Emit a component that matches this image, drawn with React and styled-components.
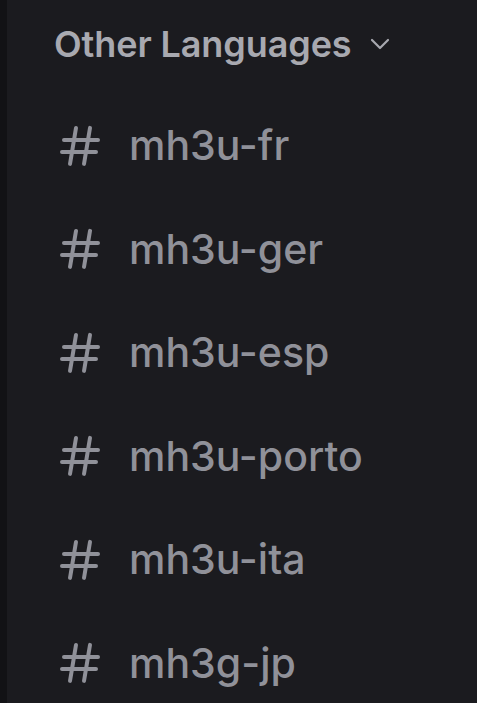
import React from 'react';
import styled, { createGlobalStyle } from 'styled-components';

const GlobalStyle = createGlobalStyle`
    html, body {
        margin: 0;
        padding: 0;
        background: #1b1b1f;
    }
    body {
        font-family: Inter, "Noto Sans", sans-serif;
    }
`;

const channels = ['mh3u-fr', 'mh3u-ger', 'mh3u-esp', 'mh3u-porto', 'mh3u-ita', 'mh3g-jp'];

const Frame = styled.div`
    display: flex;
    width: 477px;
    height: 703px;
    overflow: hidden;
    background: #1b1b1f;
`;

const Rail = styled.div`
    width: 7px;
    flex: none;
    background: #121215;
`;

const Sidebar = styled.div`
    flex: 1;
    display: flex;
    flex-direction: column;
    padding: 22px 0 0 47px;
`;

const CategoryHeader = styled.div`
    display: flex;
    align-items: center;
    gap: 18px;
    height: 48px;
    color: #a8a9b0;
    font-size: 36px;
    font-weight: 600;
    letter-spacing: -0.1px;
`;

const Chevron = () => (
    <svg width="20" height="12" viewBox="0 0 20 12" fill="none">
        <path d="M2 2l8 8 8-8" stroke="#a8a9b0" strokeWidth="2.2" strokeLinecap="round" strokeLinejoin="round" />
    </svg>
);

const ChannelList = styled.ul`
    list-style: none;
    margin: 28px 0 0;
    padding: 0;
`;

const ChannelRow = styled.li`
    display: flex;
    align-items: center;
    height: 103.5px;
    gap: 25px;
    padding-left: 2px;
    color: #909199;
    font-size: 41px;
    font-weight: 500;
`;

const HashIcon = () => (
    <svg width="48" height="48" viewBox="0 0 24 24" fill="#909199">
        <path fillRule="evenodd" d="M10.99 3.16A1 1 0 1 0 9 2.84L8.15 8H4a1 1 0 0 0 0 2h3.820l-.67 4H3a1 1 0 1 0 0 2h3.820l-.8 4.84a1 1 0 0 0 1.970.32L8.85 16h4.970l-.8 4.84a1 1 0 0 0 1.970.32l.86-5.16H20a1 1 0 1 0 0-2h-3.820l.67-4H21a1 1 0 1 0 0-2h-3.820l.8-4.84a1 1 0 1 0-1.970-.32L15.15 8h-4.970l.8-4.84ZM14.15 14l.67-4H9.85l-.67 4h4.970Z" />
    </svg>
);

const ChannelName = styled.span`
    line-height: 1;
`;

const App = () => (
    <Frame>
        <GlobalStyle />
        <Rail />
        <Sidebar>
            <CategoryHeader>
                <span>Other Languages</span>
                <Chevron />
            </CategoryHeader>
            <ChannelList>
                {channels.map(name => (
                    <ChannelRow key={name}>
                        <HashIcon />
                        <ChannelName>{name}</ChannelName>
                    </ChannelRow>
                ))}
            </ChannelList>
        </Sidebar>
    </Frame>
);

export default App;
